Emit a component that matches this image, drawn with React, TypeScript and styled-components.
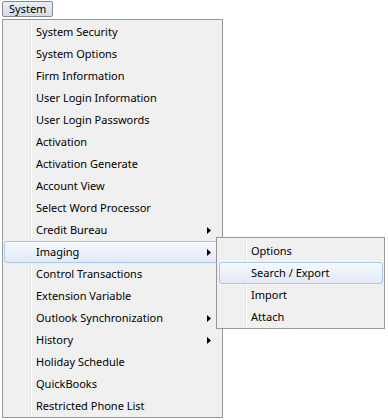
import React from "react";
import styled, { createGlobalStyle } from "styled-components";

const GlobalStyle = createGlobalStyle`
  html, body {
    margin: 0;
    padding: 0;
    background: #ffffff;
  }
  body {
    font-family: "Noto Sans", "Open Sans", Arial, sans-serif;
    font-size: 11px;
    color: #000;
  }
`;

const Page = styled.div`
  position: relative;
  width: 388px;
  height: 420px;
  padding: 1px 0 0 2px;
  box-sizing: border-box;
`;

const MenuButton = styled.div`
  box-sizing: border-box;
  width: 51px;
  height: 16px;
  border: 1px solid #868a8e;
  border-radius: 2px;
  background: linear-gradient(#eaeff5, #d3dce8);
  display: flex;
  align-items: center;
  padding-left: 6px;
  padding-bottom: 1px;
  line-height: 14px;
`;

const Menu = styled.div<{ $width: number; $gutter: number; $float?: boolean }>`
  box-sizing: border-box;
  width: ${(p) => p.$width}px;
  border: 1px solid #979797;
  background-color: #f0f0f0;
  background-image: linear-gradient(
    to right,
    transparent ${(p) => p.$gutter}px,
    #e2e3e3 ${(p) => p.$gutter}px,
    #e2e3e3 ${(p) => p.$gutter + 1}px,
    #ffffff ${(p) => p.$gutter + 1}px,
    #ffffff ${(p) => p.$gutter + 2}px,
    transparent ${(p) => p.$gutter + 2}px
  );
  display: flex;
  flex-direction: column;
  ${(p) =>
    p.$float
      ? `position: absolute; left: 216px; top: 237px; padding: 2px 1px 0 2px;`
      : `margin-top: 2px; padding: 1px 1px 0 1px;`}
`;

const Item = styled.div<{ $active?: boolean }>`
  box-sizing: border-box;
  height: 22px;
  display: flex;
  align-items: center;
  padding: 0 9px 1px 31px;
  border: 1px solid ${(p) => (p.$active ? "#a9c9ee" : "transparent")};
  border-radius: 3px;
  background: ${(p) =>
    p.$active ? "linear-gradient(#f6f9fd, #e2eaf5)" : "transparent"};
  white-space: nowrap;
`;

const Arrow = styled.svg`
  margin-left: auto;
  margin-top: 1px;
  width: 4px;
  height: 7px;
  flex: none;
`;

type Entry = { label: string; sub?: boolean; active?: boolean };

const systemItems: Entry[] = [
  { label: "System Security" },
  { label: "System Options" },
  { label: "Firm Information" },
  { label: "User Login Information" },
  { label: "User Login Passwords" },
  { label: "Activation" },
  { label: "Activation Generate" },
  { label: "Account View" },
  { label: "Select Word Processor" },
  { label: "Credit Bureau", sub: true },
  { label: "Imaging", sub: true, active: true },
  { label: "Control Transactions" },
  { label: "Extension Variable" },
  { label: "Outlook Synchronization", sub: true },
  { label: "History", sub: true },
  { label: "Holiday Schedule" },
  { label: "QuickBooks" },
  { label: "Restricted Phone List" },
];

const imagingItems: Entry[] = [
  { label: "Options" },
  { label: "Search / Export", active: true },
  { label: "Import" },
  { label: "Attach" },
];

function MenuItems({ items }: { items: Entry[] }) {
  return (
    <>
      {items.map((it) => (
        <Item key={it.label} $active={it.active}>
          {it.label}
          {it.sub && (
            <Arrow viewBox="0 0 4 7">
              <polygon points="0,0 4,3.5 0,7" fill="#000" />
            </Arrow>
          )}
        </Item>
      ))}
    </>
  );
}

export default function App() {
  return (
    <>
      <GlobalStyle />
      <Page>
        <MenuButton>System</MenuButton>
        <Menu $width={221} $gutter={27}>
          <MenuItems items={systemItems} />
        </Menu>
        <Menu $width={169} $gutter={28} $float>
          <MenuItems items={imagingItems} />
        </Menu>
      </Page>
    </>
  );
}
